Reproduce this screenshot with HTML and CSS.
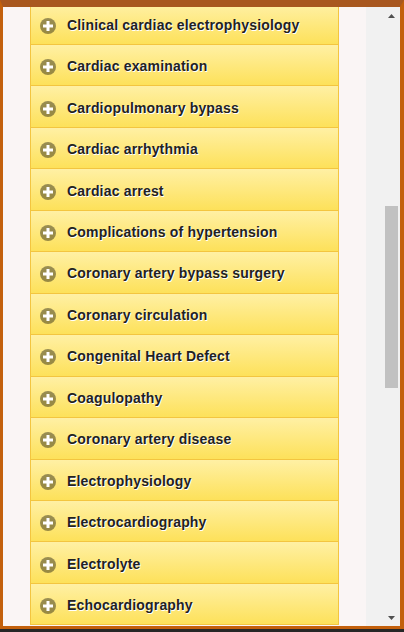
FILE: index.html
```html
<!DOCTYPE html>
<html>
<head>
<meta charset="utf-8">
<link rel="stylesheet" href="styles.css">
</head>
<body>
<div class="frame">
  <div class="content">
    <ul class="list">
      <li class="item"><span class="icon"><svg viewBox="0 0 16 16" width="16" height="16"><circle cx="8" cy="8" r="8" fill="rgba(0,0,0,0.4)"/><path d="M6.5 3h3v3.5H13v3H9.5V13h-3V9.5H3v-3h3.5z" fill="#fff"/></svg></span><span class="label">Clinical cardiac electrophysiology</span></li>
      <li class="item"><span class="icon"><svg viewBox="0 0 16 16" width="16" height="16"><circle cx="8" cy="8" r="8" fill="rgba(0,0,0,0.4)"/><path d="M6.5 3h3v3.5H13v3H9.5V13h-3V9.5H3v-3h3.5z" fill="#fff"/></svg></span><span class="label">Cardiac examination</span></li>
      <li class="item"><span class="icon"><svg viewBox="0 0 16 16" width="16" height="16"><circle cx="8" cy="8" r="8" fill="rgba(0,0,0,0.4)"/><path d="M6.5 3h3v3.5H13v3H9.5V13h-3V9.5H3v-3h3.5z" fill="#fff"/></svg></span><span class="label">Cardiopulmonary bypass</span></li>
      <li class="item"><span class="icon"><svg viewBox="0 0 16 16" width="16" height="16"><circle cx="8" cy="8" r="8" fill="rgba(0,0,0,0.4)"/><path d="M6.5 3h3v3.5H13v3H9.5V13h-3V9.5H3v-3h3.5z" fill="#fff"/></svg></span><span class="label">Cardiac arrhythmia</span></li>
      <li class="item"><span class="icon"><svg viewBox="0 0 16 16" width="16" height="16"><circle cx="8" cy="8" r="8" fill="rgba(0,0,0,0.4)"/><path d="M6.5 3h3v3.5H13v3H9.5V13h-3V9.5H3v-3h3.5z" fill="#fff"/></svg></span><span class="label">Cardiac arrest</span></li>
      <li class="item"><span class="icon"><svg viewBox="0 0 16 16" width="16" height="16"><circle cx="8" cy="8" r="8" fill="rgba(0,0,0,0.4)"/><path d="M6.5 3h3v3.5H13v3H9.5V13h-3V9.5H3v-3h3.5z" fill="#fff"/></svg></span><span class="label">Complications of hypertension</span></li>
      <li class="item"><span class="icon"><svg viewBox="0 0 16 16" width="16" height="16"><circle cx="8" cy="8" r="8" fill="rgba(0,0,0,0.4)"/><path d="M6.5 3h3v3.5H13v3H9.5V13h-3V9.5H3v-3h3.5z" fill="#fff"/></svg></span><span class="label">Coronary artery bypass surgery</span></li>
      <li class="item"><span class="icon"><svg viewBox="0 0 16 16" width="16" height="16"><circle cx="8" cy="8" r="8" fill="rgba(0,0,0,0.4)"/><path d="M6.5 3h3v3.5H13v3H9.5V13h-3V9.5H3v-3h3.5z" fill="#fff"/></svg></span><span class="label">Coronary circulation</span></li>
      <li class="item"><span class="icon"><svg viewBox="0 0 16 16" width="16" height="16"><circle cx="8" cy="8" r="8" fill="rgba(0,0,0,0.4)"/><path d="M6.5 3h3v3.5H13v3H9.5V13h-3V9.5H3v-3h3.5z" fill="#fff"/></svg></span><span class="label">Congenital Heart Defect</span></li>
      <li class="item"><span class="icon"><svg viewBox="0 0 16 16" width="16" height="16"><circle cx="8" cy="8" r="8" fill="rgba(0,0,0,0.4)"/><path d="M6.5 3h3v3.5H13v3H9.5V13h-3V9.5H3v-3h3.5z" fill="#fff"/></svg></span><span class="label">Coagulopathy</span></li>
      <li class="item"><span class="icon"><svg viewBox="0 0 16 16" width="16" height="16"><circle cx="8" cy="8" r="8" fill="rgba(0,0,0,0.4)"/><path d="M6.5 3h3v3.5H13v3H9.5V13h-3V9.5H3v-3h3.5z" fill="#fff"/></svg></span><span class="label">Coronary artery disease</span></li>
      <li class="item"><span class="icon"><svg viewBox="0 0 16 16" width="16" height="16"><circle cx="8" cy="8" r="8" fill="rgba(0,0,0,0.4)"/><path d="M6.5 3h3v3.5H13v3H9.5V13h-3V9.5H3v-3h3.5z" fill="#fff"/></svg></span><span class="label">Electrophysiology</span></li>
      <li class="item"><span class="icon"><svg viewBox="0 0 16 16" width="16" height="16"><circle cx="8" cy="8" r="8" fill="rgba(0,0,0,0.4)"/><path d="M6.5 3h3v3.5H13v3H9.5V13h-3V9.5H3v-3h3.5z" fill="#fff"/></svg></span><span class="label">Electrocardiography</span></li>
      <li class="item"><span class="icon"><svg viewBox="0 0 16 16" width="16" height="16"><circle cx="8" cy="8" r="8" fill="rgba(0,0,0,0.4)"/><path d="M6.5 3h3v3.5H13v3H9.5V13h-3V9.5H3v-3h3.5z" fill="#fff"/></svg></span><span class="label">Electrolyte</span></li>
      <li class="item"><span class="icon"><svg viewBox="0 0 16 16" width="16" height="16"><circle cx="8" cy="8" r="8" fill="rgba(0,0,0,0.4)"/><path d="M6.5 3h3v3.5H13v3H9.5V13h-3V9.5H3v-3h3.5z" fill="#fff"/></svg></span><span class="label">Echocardiography</span></li>
    </ul>
  </div>
  <div class="gutter"></div>
  <div class="scrollbar">
    <div class="sb-btn"><svg width="7" height="4" viewBox="0 0 7 4"><polygon points="0,4 7,4 3.5,0" fill="#505050"/></svg></div>
    <div class="sb-track"><div class="sb-thumb"></div></div>
    <div class="sb-btn"><svg width="7" height="4" viewBox="0 0 7 4"><polygon points="0,0 7,0 3.5,4" fill="#505050"/></svg></div>
  </div>
</div>
</body>
</html>
```

FILE: styles.css
```css
html, body {
  margin: 0;
  padding: 0;
}
body {
  background: #262626;
  width: 404px;
  height: 632px;
  overflow: hidden;
}
.frame {
  box-sizing: border-box;
  width: 404px;
  height: 629px;
  border-top: 7px solid #a8571f;
  border-left: 3px solid #c3600c;
  border-right: 4px solid #c3600c;
  border-bottom: 3px solid #c3600c;
  display: flex;
}
.content {
  flex: 1;
  background: #faf5f5;
  overflow: hidden;
  padding: 0 27px;
}
.list {
  list-style: none;
  margin: -3.46px 0 0 0;
  padding: 0;
}
.item {
  box-sizing: border-box;
  height: 41.46px;
  border: 1px solid #f3c540;
  border-top: none;
  background: linear-gradient(#fff0a4, #fde15a);
  display: flex;
  align-items: center;
  padding-left: 9px;
  gap: 11px;
  font-family: "Liberation Sans", Arial, sans-serif;
  font-weight: bold;
  font-size: 14px;
  letter-spacing: 0.18px;
  color: #222;
  text-shadow: 1px 1px 0 #fff;
}
.icon {
  width: 16px;
  height: 16px;
  margin-top: 4px;
  display: flex;
}
.label {
  padding-top: 2px;
  white-space: nowrap;
}
.gutter {
  width: 17px;
  background: #f1f1f1;
}
.scrollbar {
  width: 17px;
  background: #f1f1f1;
  display: flex;
  flex-direction: column;
}
.sb-btn {
  height: 17px;
  display: flex;
  align-items: center;
  justify-content: center;
}
.sb-track {
  flex: 1;
  padding: 0 2px;
}
.sb-thumb {
  margin-top: 182px;
  height: 182px;
  background: #c1c1c1;
}
```
